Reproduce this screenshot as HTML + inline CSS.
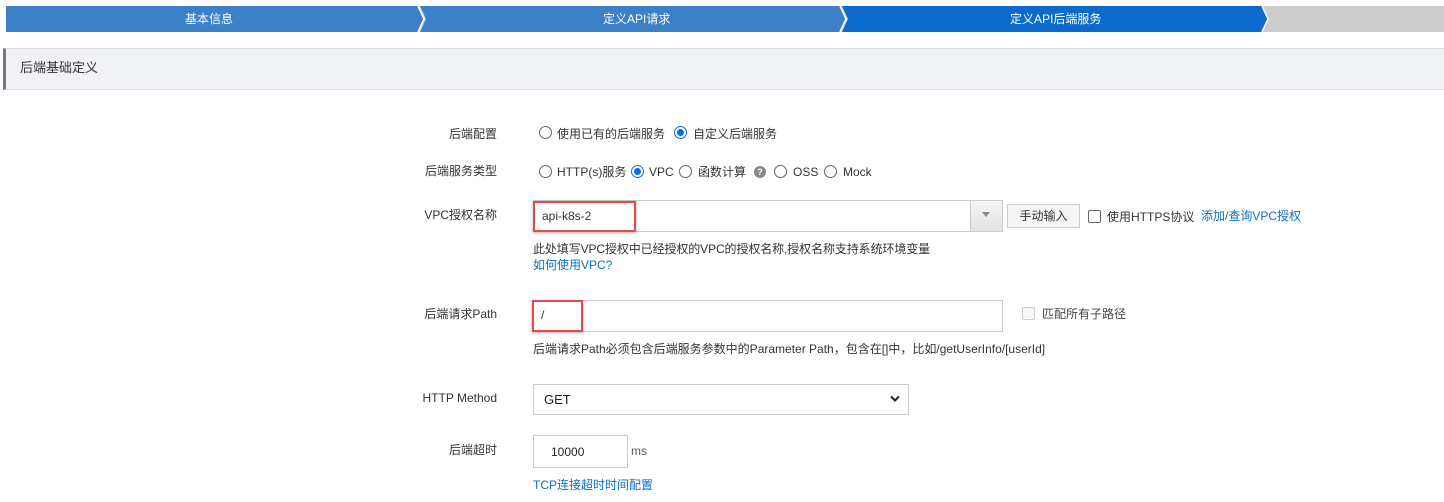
<!DOCTYPE html>
<html><head><meta charset="utf-8"><style>
*{box-sizing:border-box;margin:0;padding:0}
body{width:1444px;height:502px;background:#fff;font-family:"Liberation Sans","Noto Sans CJK SC",sans-serif;font-size:12px;color:#333;position:relative;overflow:hidden}
.a{position:absolute;white-space:nowrap}
.lbl{position:absolute;right:947px;white-space:nowrap;line-height:16px}
.r{position:absolute;width:13px;height:13px;border:1px solid #666;border-radius:50%;background:#fff}
.r.on{border-color:#0a6fd8}
.r.on:after{content:"";position:absolute;left:2px;top:2px;width:7px;height:7px;border-radius:50%;background:#0a6fd8}
.t{position:absolute;line-height:16px;white-space:nowrap}
.lk{color:#0a70c9}
.box{position:absolute;border:1px solid #ccc;background:#fff}
.red{position:absolute;border:2px solid #e5484d;box-shadow:0 1px 3px rgba(0,0,0,.3)}
</style></head><body>
<svg class="a" style="left:0;top:0" width="1444" height="34">
<rect x="6" y="6" width="1438" height="26" fill="#ccc"/>
<polygon points="6,6 418,6 424,19 418,32 6,32" fill="#3c80c8"/>
<polygon points="420,6 840,6 846,19 840,32 420,32 426,19" fill="#3c80c8"/>
<polygon points="842,6 1262,6 1268,19 1262,32 842,32 848,19" fill="#0b6acb"/>
<polyline points="418,6 424,19 418,32" fill="none" stroke="#fff" stroke-width="1.5"/>
<polyline points="840,6 846,19 840,32" fill="none" stroke="#fff" stroke-width="1.5"/>
<polyline points="1262,6 1268,19 1262,32" fill="none" stroke="#fff" stroke-width="1.5"/>
</svg>
<div class="t" style="left:185px;top:11px;color:#fff">基本信息</div>
<div class="t" style="left:603px;top:11px;color:#fff">定义API请求</div>
<div class="t" style="left:1010px;top:11px;color:#fff">定义API后端服务</div>
<div class="a" style="left:3px;top:48px;width:1441px;height:42px;background:#f1f2f5;border-top:1px solid #dcdde2;border-bottom:1px solid #dcdde2;border-left:3px solid #7a7580"></div>
<div class="t" style="left:20px;top:60px;font-size:13px;color:#333">后端基础定义</div>

<div class="lbl" style="top:126px">后端配置</div>
<div class="r" style="left:539px;top:126px"></div><div class="t" style="left:557px;top:126px">使用已有的后端服务</div>
<div class="r on" style="left:674px;top:126px"></div><div class="t" style="left:693px;top:126px">自定义后端服务</div>

<div class="lbl" style="top:163px">后端服务类型</div>
<div class="r" style="left:539px;top:165px"></div><div class="t" style="left:557px;top:164px">HTTP(s)服务</div>
<div class="r on" style="left:631px;top:165px"></div><div class="t" style="left:649px;top:164px">VPC</div>
<div class="r" style="left:679px;top:165px"></div><div class="t" style="left:698px;top:164px">函数计算</div>
<div class="a" style="left:754px;top:166px;width:12px;height:12px;border-radius:50%;background:#888;color:#fff;font-size:9px;line-height:12px;text-align:center;font-weight:bold">?</div>
<div class="r" style="left:774px;top:165px"></div><div class="t" style="left:793px;top:164px">OSS</div>
<div class="r" style="left:824px;top:165px"></div><div class="t" style="left:843px;top:164px">Mock</div>

<div class="lbl" style="top:207px">VPC授权名称</div>
<div class="box" style="left:533px;top:200px;width:470px;height:32px;border-color:#ccc"></div>
<div class="a" style="left:970px;top:201px;width:32px;height:30px;background:linear-gradient(#f6f6f6,#e2e2e2);border-left:1px solid #ccc"></div>
<div class="a" style="left:982px;top:212px;width:0;height:0;border-left:4px solid transparent;border-right:4px solid transparent;border-top:5px solid #888"></div>
<div class="red" style="left:533px;top:201px;width:103px;height:31px"></div>
<div class="t" style="left:542px;top:208px">api-k8s-2</div>
<div class="a" style="left:1007px;top:204px;width:73px;height:24px;border:1px solid #ccc;background:#f5f5f5;text-align:center;line-height:22px">手动输入</div>
<div class="a" style="left:1088px;top:210px;width:13px;height:13px;border:1px solid #666;border-radius:2px"></div>
<div class="t" style="left:1107px;top:209px">使用HTTPS协议</div>
<div class="t lk" style="left:1201px;top:208px">添加/查询VPC授权</div>
<div class="t" style="left:533px;top:241px;letter-spacing:-0.1px">此处填写VPC授权中已经授权的VPC的授权名称,授权名称支持系统环境变量</div>
<div class="t lk" style="left:533px;top:257px">如何使用VPC?</div>

<div class="lbl" style="top:306px">后端请求Path</div>
<div class="box" style="left:533px;top:300px;width:470px;height:32px"></div>
<div class="red" style="left:532px;top:300px;width:51px;height:32px"></div>
<div class="t" style="left:541px;top:307px">/</div>
<div class="a" style="left:1022px;top:307px;width:13px;height:13px;border:1px solid #ccc;border-radius:2px;background:#f7f7f7"></div>
<div class="t" style="left:1042px;top:306px;color:#444">匹配所有子路径</div>
<div class="t" style="left:533px;top:341px">后端请求Path必须包含后端服务参数中的Parameter Path，包含在[]中，比如/getUserInfo/[userId]</div>

<div class="lbl" style="top:390px">HTTP Method</div>
<div class="box" style="left:533px;top:384px;width:376px;height:31px"></div>
<div class="t" style="left:544px;top:392px;font-size:13px;color:#222">GET</div>
<svg class="a" style="left:890px;top:395px" width="10" height="8"><polyline points="1,1.5 5,5.5 9,1.5" fill="none" stroke="#222" stroke-width="2"/></svg>

<div class="lbl" style="top:442px">后端超时</div>
<div class="box" style="left:533px;top:435px;width:95px;height:33px"></div>
<div class="t" style="left:551px;top:444px;color:#222">10000</div>
<div class="t" style="left:631px;top:443px;color:#555">ms</div>
<div class="t lk" style="left:533px;top:477px">TCP连接超时时间配置</div>
</body></html>
